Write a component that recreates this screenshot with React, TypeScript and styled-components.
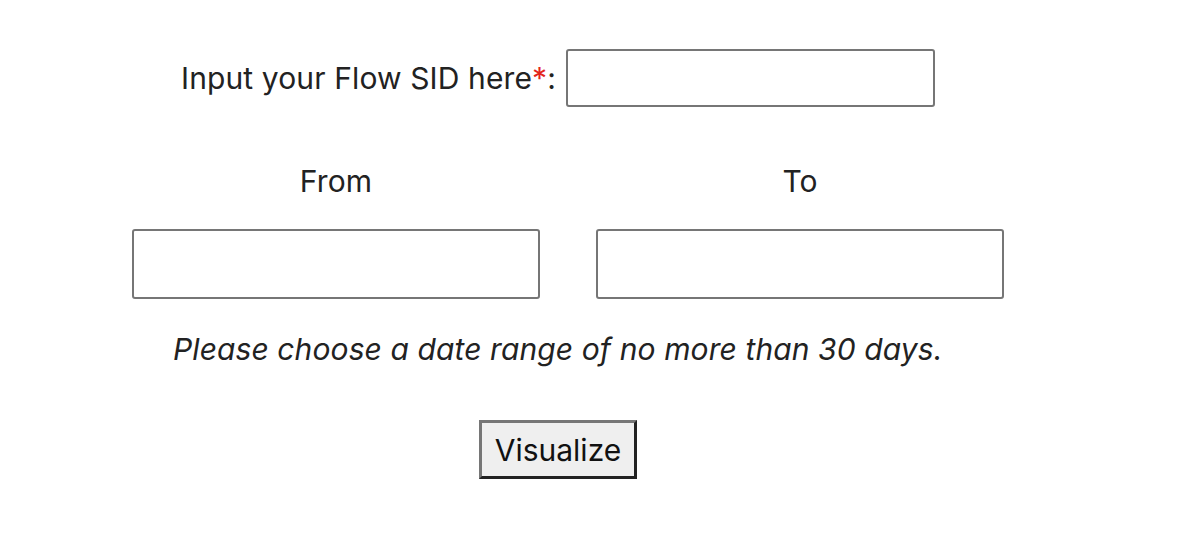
import React from "react";
import styled, { createGlobalStyle } from "styled-components";

const Global = createGlobalStyle`
  html, body { margin: 0; padding: 0; background: #fff; }
  body { font-family: Inter, "Liberation Sans", Arial, sans-serif; color: #222; }
`;

const Page = styled.div`
  padding-top: 49px;
  display: flex;
  flex-direction: column;
`;

const SidRow = styled.div`
  display: flex;
  align-items: center;
  gap: 10px;
  padding-left: 181px;
`;

const Label = styled.label`
  font-size: 30px;
  line-height: 34px;
  letter-spacing: 0.12px;
  color: #222;
`;

const Required = styled.span`
  color: #e3261b;
`;

const TextInput = styled.input<{ $w: number; $h: number }>`
  box-sizing: border-box;
  width: ${(p) => p.$w}px;
  height: ${(p) => p.$h}px;
  border: 2px solid #767676;
  border-radius: 3px;
  background: #fff;
  font-size: 20px;
  padding: 4px 8px;
  margin: 0;
`;

const DateGrid = styled.div`
  display: grid;
  grid-template-columns: 408px 408px;
  column-gap: 56px;
  padding-left: 132px;
  margin-top: 57px;
`;

const DateCol = styled.div`
  display: flex;
  flex-direction: column;
  align-items: center;
  gap: 31px;
`;

const Hint = styled.p`
  margin: 33px 0 0;
  padding-left: 173px;
  font-size: 30px;
  line-height: 34px;
  letter-spacing: 0.1px;
  font-style: italic;
  color: #222;
`;

const ButtonRow = styled.div`
  padding-left: 479px;
  margin-top: 54px;
`;

const Button = styled.button`
  box-sizing: border-box;
  width: 158px;
  height: 59px;
  font-family: Inter, "Liberation Sans", Arial, sans-serif;
  font-size: 30px;
  color: #111;
  background: #efefef;
  border-style: solid;
  border-width: 3px;
  border-color: #767676 #222 #222 #767676;
  padding: 0;
`;

export default function App() {
  return (
    <>
      <Global />
      <Page>
        <SidRow>
          <Label htmlFor="sid">
            Input your Flow SID here<Required>*</Required>:
          </Label>
          <TextInput id="sid" $w={369} $h={58} />
        </SidRow>
        <DateGrid>
          <DateCol>
            <Label htmlFor="from">From</Label>
            <TextInput id="from" $w={408} $h={70} />
          </DateCol>
          <DateCol>
            <Label htmlFor="to">To</Label>
            <TextInput id="to" $w={408} $h={70} />
          </DateCol>
        </DateGrid>
        <Hint>Please choose a date range of no more than 30 days.</Hint>
        <ButtonRow>
          <Button>Visualize</Button>
        </ButtonRow>
      </Page>
    </>
  );
}
